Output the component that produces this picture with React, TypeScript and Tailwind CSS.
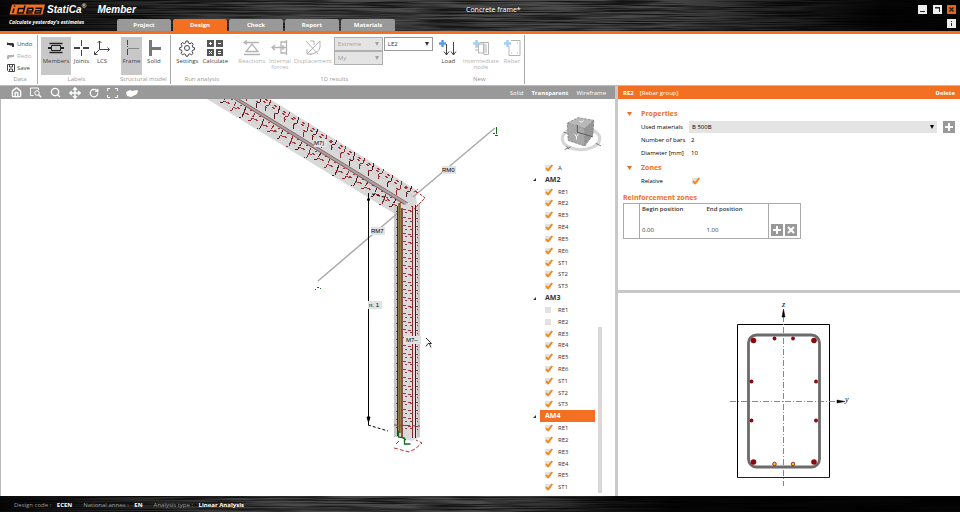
import { useState } from "react";
import type { ReactNode } from "react";
import { Home, Move, RotateCw, Search } from "lucide-react";
import clsx from "clsx";

const tabs = ["Project", "Design", "Check", "Report", "Materials"];

const tree = [
  { name: "AM2", items: ["RE1", "RE2", "RE3", "RE4", "RE5", "RE6", "ST1", "ST2", "ST3"], off: [] as string[] },
  { name: "AM3", items: ["RE1", "RE2", "RE3", "RE4", "RE5", "RE6", "ST1", "ST2", "ST3"], off: ["RE1", "RE2"] },
  { name: "AM4", items: ["RE1", "RE2", "RE3", "RE4", "RE5", "ST1"], off: [] as string[] },
];

// brushed metal behind the title bar and the status bar
const Brushed = ({ id }: { id: string }) => (
  <svg className="absolute inset-0 w-full h-full" aria-hidden="true">
    <filter id={id} x="0" y="0" width="100%" height="100%">
      <feTurbulence type="fractalNoise" baseFrequency="0.012 0.7" numOctaves="3" seed="4" />
      <feColorMatrix values="0 0 0 0 0  0 0 0 0 0  0 0 0 0 0  0 0 0 3 -1.1" />
    </filter>
    <rect width="100%" height="100%" opacity=".7" filter={`url(#${id})`} />
  </svg>
);

const ToolButton = ({
  label,
  width,
  active,
  disabled,
  children,
}: {
  label: string;
  width: string;
  active?: boolean;
  disabled?: boolean;
  children: ReactNode;
}) => (
  <button
    disabled={disabled}
    className={clsx(
      "flex flex-col items-center h-[38px] pt-[2px] shrink-0",
      width,
      active && "bg-[#c8c8c8]",
      disabled ? "text-[#b4b4b4]" : "text-[#444]"
    )}
  >
    <svg className="w-[18px] h-[18px] shrink-0" viewBox="0 0 18 18" fill="none" stroke="currentColor">
      {children}
    </svg>
    <span className="text-center leading-[6px] pt-px whitespace-pre">{label}</span>
  </button>
);

const Group = ({ title, className, children }: { title: string; className?: string; children: ReactNode }) => (
  <div className={clsx("flex flex-col items-center shrink-0 pt-[3px]", className)}>
    <div className="flex h-[38px]">{children}</div>
    <div className="h-[9px] leading-[9px] text-[#999] whitespace-nowrap">{title}</div>
  </div>
);

const Divider = () => <div className="w-px my-px bg-[#aaa] shrink-0" />;

const Dropdown = ({ label, value, options, disabled }: { label: string; value: string; options: string[]; disabled?: boolean }) => (
  <div
    className={clsx(
      "relative w-[49px] h-[14px] border",
      disabled ? "bg-[#e4e4e4] border-[#b0b0b0] text-[#a0a0a0]" : "bg-white border-[#999] text-[#333]"
    )}
  >
    <select
      aria-label={label}
      defaultValue={value}
      disabled={disabled}
      className="w-full h-full pl-[3px] appearance-none bg-transparent opacity-100 block"
    >
      {options.map((o) => (
        <option key={o}>{o}</option>
      ))}
    </select>
    <svg className="absolute right-[3px] top-[4px] w-[4px] h-[4px] pointer-events-none" viewBox="0 0 4 4">
      <path d="M0 0h4L2 4z" fill="currentColor" />
    </svg>
  </div>
);

const Tick = ({ label, on }: { label: string; on: boolean }) => {
  const [checked, setChecked] = useState(on);
  return (
    <span className="relative flex w-[8px] h-[8px] shrink-0">
      <input
        type="checkbox"
        aria-label={label}
        checked={checked}
        onChange={(e) => setChecked(e.target.checked)}
        className="appearance-none w-[6px] h-[6px] mt-px bg-[#e2e2e2]"
      />
      {checked && (
        <svg className="absolute inset-0 w-[8px] h-[8px] pointer-events-none" viewBox="0 0 8 8" fill="none">
          <path d="M1 4 3 6.300 7.300 1" stroke="#f7860f" strokeWidth="1.800" />
        </svg>
      )}
    </span>
  );
};

const SquareButton = ({ label, children }: { label: string; children: ReactNode }) => (
  <button aria-label={label} className="w-[12px] h-[12px] bg-[#999] shrink-0">
    <svg className="w-[12px] h-[12px]" viewBox="0 0 12 12" stroke="white" strokeWidth="2">
      {children}
    </svg>
  </button>
);

const TitleBar = () => (
  <header className="relative bg-[linear-gradient(90deg,#0a0a0a,#4a4a4a_30%,#4a4a4a_68%,#050505_92%)] border-b-3 border-[#f36f21] h-[34px] shrink-0">
    <Brushed id="metal-top" />
    <div className="relative flex h-full text-white">
      <div className="w-[117px] pl-[9px] pt-[3px] shrink-0">
        <div className="flex items-center h-[13px]">
          <svg className="w-[36px] h-[11px] shrink-0" viewBox="0 0 36 11" fill="none" stroke="#f36f21">
            <path d="M3 .5H36L33.500 10.500H.5Z" fill="#f36f21" stroke="none" />
            <g stroke="#111" strokeWidth="1.500">
              <path d="M5 4.500 3.800 9M5.600 1.500v1.200" />
              <path d="M16 1.500 14.200 9H8.500L9.600 4.500H15" />
              <path d="M18 7h5.500L24 4.200H19L17.600 9H23.500" />
              <path d="M26.500 4.200H32.500L31.300 9H26L26.600 6.800H31" />
            </g>
          </svg>
          <span className="w-[38px] pl-[2px] font-['Liberation_Sans'] font-bold italic text-[10px] leading-[13px]">StatiCa</span>
          <span className="w-[4px] text-[6px] leading-[6px] self-start">®</span>
          <span className="pl-[12px] font-['Liberation_Sans'] font-bold italic text-[10px] leading-[13px]">Member</span>
        </div>
        <div className="pt-[2px] font-bold italic text-[5px] leading-[8px] whitespace-nowrap">
          Calculate yesterday&apos;s estimates
        </div>
      </div>
      <nav className="flex items-end gap-[2px]">
        {tabs.map((tab) => (
          <button
            key={tab}
            className={clsx(
              "w-[54px] h-[12px] rounded-t-[2px] font-bold leading-[12px]",
              tab === "Design" ? "bg-[#f36f21]" : "bg-[#999]"
            )}
          >
            {tab}
          </button>
        ))}
      </nav>
      <h1 className="pl-[71px] pt-[4px] text-[7px] leading-[12px] whitespace-nowrap">Concrete frame*</h1>
      <div className="ml-auto mr-[4px] pt-[5px] flex flex-col items-end gap-[5px]">
        <div className="flex">
          <button aria-label="Minimize" className="w-[9px] h-[9px] bg-[#eee] mr-[6px]">
            <svg className="w-[9px] h-[9px]" viewBox="0 0 9 9"><path d="M2 6h5v1H2z" fill="#222" /></svg>
          </button>
          <button aria-label="Restore" className="w-[9px] h-[9px] bg-[#eee] mr-[5px]">
            <svg className="w-[9px] h-[9px]" viewBox="0 0 9 9"><path d="M2 2h5v5H6V3.500H2z" fill="#222" /></svg>
          </button>
          <button aria-label="Close" className="w-[9px] h-[9px] bg-[#e8641b]">
            <svg className="w-[9px] h-[9px]" viewBox="0 0 9 9"><path d="m2.500 2.500 4 4m0-4-4 4" stroke="#222" strokeWidth="1.400" /></svg>
          </button>
        </div>
        <button aria-label="About" className="w-[9px] h-[9px] bg-[#eee]">
          <svg className="w-[9px] h-[9px]" viewBox="0 0 9 9"><path d="M4 2h1v1H4zM4 4h1v3H4z" fill="#222" /></svg>
        </button>
      </div>
    </div>
  </header>
);

const Ribbon = () => (
  <div className="flex h-[51px] bg-white shrink-0 text-[#444]">
    <div className="w-[37px] flex flex-col pt-[4px] pl-[7px] shrink-0">
      <button className="flex items-center gap-[3px] h-[12px]">
        <svg className="w-[7px] h-[7px]" viewBox="0 0 7 7"><path d="M0 4 0 1 1 2H6L7 3V6H5V4.500H3L2 4z" fill="#333" /></svg>
        Undo
      </button>
      <button disabled className="flex items-center gap-[3px] h-[12px] text-[#b4b4b4]">
        <svg className="w-[7px] h-[7px]" viewBox="0 0 7 7"><path d="M7 4V1L6 2H1L0 3V6H2V4.500H4L5 4z" fill="#b4b4b4" /></svg>
        Redo
      </button>
      <button className="flex items-center gap-[2px] h-[12px]">
        <svg className="w-[8px] h-[8px]" viewBox="0 0 8 8" fill="none" stroke="#444"><path d="M.5.5h7v7h-6l-1-1zM2.500.5v2.500h3V.5M2.500 7V5h3v2.500" /></svg>
        Save
      </button>
      <div className="h-[9px] leading-[9px] mt-px text-[#999] w-[26px] text-center">Data</div>
    </div>
    <Divider />
    <Group title="Labels" className="ml-[3px]">
      <ToolButton label="Members" width="w-[30px]" active>
        <path d="M2.500 4.500h13M2.500 13.500h13" stroke="#222" strokeWidth="1.300" />
        <path d="M4.500 6.500h9v5h-9z" stroke="#222" />
        <path d="M1 9h4M13 9h4" strokeWidth="2" stroke="#222" />
      </ToolButton>
      <ToolButton label="Joints" width="w-[21px]">
        <path d="M8.500 1v6M8.500 11v6" />
        <path d="M1 9h6M10 9h6" strokeWidth="2" />
      </ToolButton>
      <ToolButton label="LCS" width="w-[20px]">
        <path d="M6.500 2v8.500h10M6.500 10.500 1.500 15.500M4.500 4l2-2 2 2M14.500 8.500l2 2-2 2M1.500 12.500v3h3" />
      </ToolButton>
    </Group>
    <Group title="Structural model" className="ml-[8px]">
      <ToolButton label="Frame" width="w-[21px]" active>
        <path d="M5.500 1v5M5.500 7v1M5.500 10v6" />
        <path d="M6 9.500h11" stroke="#888" />
      </ToolButton>
      <ToolButton label="Solid" width="w-[24px]">
        <path d="M5.500 1v16M6 9.500h10" strokeWidth="3" stroke="#777" />
      </ToolButton>
    </Group>
    <div className="w-[3px] shrink-0" />
    <Divider />
    <Group title="Run analysis" className="ml-[3px]">
      <ToolButton label="Settings" width="w-[27px]">
        <circle cx="9" cy="9" r="2.500" />
        <path d="m7.500 4 .5-2h2l.5 2 1.500.7 1.800-1 1.400 1.500-1 1.700.5 1.300 1.800.5v2l-1.800.5-.6 1.400 1 1.800-1.500 1.400-1.700-1-1.400.6-.5 1.800H8l-.5-1.800-1.400-.6-1.700 1L3 14.300l1-1.700-.6-1.500L1.600 10.700V8.700l1.800-.5L4 6.800 3 5.100l1.400-1.500 1.800 1z" />
      </ToolButton>
      <ToolButton label="Calculate" width="w-[29px]">
        <path d="M1 1h7v7H1zM10 1h7v7h-7zM1 10h7v7H1zM10 10h7v7h-7z" fill="#555" stroke="none" />
        <path d="M3 4.500h3M4.500 3v3M12 4.500h3M3 12l3 3m0-3-3 3M12 12.500h3M12 14.500h3" stroke="white" />
      </ToolButton>
    </Group>
    <Group title="1D results" className="ml-[6px]">
      <ToolButton label="Reactions" width="w-[32px]" disabled>
        <path d="M1 3.500h15M4 1.500 1 3.500l3 2M9 5l6 7.500H3zM1 15.500h16" strokeWidth="1.300" />
      </ToolButton>
      <ToolButton label={"Internal\nforces"} width="w-[24px]" disabled>
        <path d="M1 8.500h14M4 6 1 8.500 4 11M15.500 1v15M15 3H10v11h5M12 6v5" strokeWidth="1.300" />
      </ToolButton>
      <ToolButton label="Displacement" width="w-[42px]" disabled>
        <path d="M2 2l12 13M16 2 3 15M16 2v6q-1 6-10 7.500M3 10v5h5M6 2h4v4" />
      </ToolButton>
      <div className="flex flex-col">
        <Dropdown label="Result extreme" value="Extreme" options={["Extreme", "All"]} disabled />
        <Dropdown label="Result component" value="My" options={["My", "Mz", "N"]} disabled />
      </div>
      <div className="pl-px">
        <Dropdown label="Load effect" value="LE2" options={["LE1", "LE2"]} />
      </div>
    </Group>
    <Group title="New" className="ml-[3px]">
      <ToolButton label="Load" width="w-[25px]">
        <path d="M7.500 5v11M14.500 3v13M5 12.500 7.500 16l2.500-3.500M12 12.500l2.500 3.500 2.500-3.500" />
        <path d="M0 4.500h7M3.500 1v7" stroke="#5b9be6" strokeWidth="2.500" />
      </ToolButton>
      <ToolButton label={"Intermediate\nnode"} width="w-[40px]" disabled>
        <path d="M6.500 5v9h5V5zM8 3.500h8.500v12H12M12 3.500v12M3 8h3M3 11h3M14 5v9" />
        <path d="M1 4.500h7M4.500 1v7" stroke="#a9cdf3" strokeWidth="2.500" />
      </ToolButton>
      <ToolButton label="Rebar" width="w-[22px]" disabled>
        <path d="M8 1.500h9v15H6V7M8 14h1M14 14h1M14 4h1" />
        <path d="M1 4.500h7M4.500 1v7" stroke="#a9cdf3" strokeWidth="2.500" />
      </ToolButton>
    </Group>
    <div className="w-px" />
    <Divider />
  </div>
);

// stirrup marks along the inclined beam
const beamMarks = Array.from({ length: 19 }, (_, i) => {
  const t = i / 19;
  return { x: Math.round(222 + t * 178), y: Math.round(91 + t * 109), j: (i * 37) % 5 };
});

const columnMarks = Array.from({ length: 28 }, (_, i) => ({ y: 209 + i * 8, j: (i * 23) % 4 }));

const Scene = () => (
  <svg className="absolute top-0 left-0 w-[614px] h-[397px]" viewBox="1 99 614 397" fill="none">
    <path d="M207 99H270L415 189 417 204 403 214H395Z" fill="#d8d8d8" />
    <path d="M394 206h26v231l-8 4-18-5z" fill="#dadada" />
    <path d="M394 204h3v233h-3zM417 204h3v233h-3z" fill="#c8c8c8" />
    <path d="M495 128 413 197M399 212 318 281" stroke="#aaa" strokeWidth="1.500" />
    <g strokeDasharray="1 2" stroke="#bbb">
      <path d="M217 99 400 209M227 99 404 205M252 99 412 196M262 99 414 192" />
    </g>
    <path d="M236 99 406 204" stroke="#a3a3a3" strokeWidth="3" />
    <path d="M234 99 404 204M239 99 408 203" stroke="#86494c" strokeWidth=".8" />
    <g shapeRendering="crispEdges">
      {beamMarks.map((m, i) => (
        <g key={i} stroke={i % 2 ? "#93262c" : "#4c1a20"}>
          <path d={`M${m.x + 21} ${m.y - 8}l-2 ${4 + m.j}l-3 1l-1 5`} />
          <path d={`M${m.x + 5} ${m.y + 5}l-4 ${6 + m.j}l-3 1`} strokeDasharray="5 1" />
          <path
            d={`M${m.x + 24} ${m.y - 3}l3 2M${m.x + 2} ${m.y + 10}l4 2M${m.x - 4} ${m.y + 5}l3 2M${m.x + 13} ${m.y - 7}l3 2M${m.x + 9} ${m.y + 8}l2 1M${m.x + 15} ${m.y - 1}l2 1`}
            stroke="#a8343a"
          />
        </g>
      ))}
      {columnMarks.map((m, i) => (
        <g key={i} stroke="#98383c">
          <path d={`M403 ${m.y}l9 2`} strokeDasharray="3 2" />
          <path d={`M405 ${m.y + 4}l7 ${m.j - 2}`} strokeDasharray="2 3" />
          <path d={`M396 ${m.y + 2}h2M416 ${m.y + 1}l2 1M417 ${m.y + 4}h1`} />
        </g>
      ))}
    </g>
    <path d="M397.500 206v230" stroke="#4a2a24" />
    <path d="M399.500 203v230" stroke="#7d6015" strokeWidth="2.500" />
    <path d="M402 208v230" stroke="#6b1f28" strokeWidth="1.500" />
    <path d="M412.500 206v232" stroke="#7e2a2e" />
    <path d="M415.500 205v233" stroke="#4e1418" />
    <path d="M414 192l4-3M420 194l5 4-9 9M411 206l4 3" stroke="#b22f34" strokeDasharray="3 1" />
    <path d="M394 425l26 1M394 448l15 4 6-3 7-6-6-3M396 444l3-3" stroke="#b22f34" strokeDasharray="4 2" />
    <path d="M398.500 431v6l6 1v6h6M402 437l4 3" stroke="#156b1d" strokeWidth="1.300" />
    <path d="M496.500 127v7M493 133.500h2M495 135.500h3" stroke="#156b1d" />
    <path d="M315 289.500h1M317 287.500h2M320 288.500h1" stroke="#156b1d" />
    <path d="M368.500 193v232" stroke="#000" />
    <circle cx="368.500" cy="199.500" r="1.500" fill="#000" />
    <path d="M367 417h3l-1.500 5z" fill="#000" stroke="#000" />
    <path d="M368 425l20 6M372 194l16 4" stroke="#000" strokeDasharray="3 2" />
    <g fill="#e2e2e2">
      <path d="M314 139h13v8h-13zM371 227h14v8h-14zM368 301h14v8h-14zM404 336h17v8h-17zM442 166h14v8h-14z" />
    </g>
    <g fill="#000" fontSize="6" fontFamily="Liberation Sans">
      <text x="314" y="145">M7)</text>
      <text x="371" y="233">RM7</text>
      <text x="369" y="307">n. 1</text>
      <text x="406" y="342">M7–</text>
      <text x="442" y="172">RM0</text>
    </g>
    <path d="M426 338l5.500 5.500H428l-2 3M429.500 344l1.500 3.500" stroke="#333" />
  </svg>
);

const ViewCube = () => (
  <svg className="w-[46px] h-[40px]" viewBox="0 0 46 40">
    <ellipse cx="23" cy="24" rx="20.500" ry="12" fill="none" stroke="#d6d6d6" strokeWidth="3.500" />
    <path d="m8 7 12-6 17 3-10 9z" fill="#b8b8b8" />
    <path d="m8 7 19 6v19L9 26z" fill="#a8a8a8" />
    <path d="m27 13 10-9-1 16-9 12z" fill="#969696" />
    <path d="m8 7 12-6 17 3-10 9zM27 13v19L9 26 8 7M27 32l9-12 1-16" fill="none" stroke="#888" strokeDasharray="3 1" />
    <path d="M19 9v8l17 5" fill="none" stroke="#555" />
    <path d="m16 19 2 3 2-3m-2 3v3M21 5l3 1 2-2" fill="none" stroke="#fff" />
    <path d="m5 36 7-3m-5-1 3 4M39 29l6 3M4 17l4 1" stroke="#777" />
  </svg>
);

const Tree = () => (
  <div className="flex flex-1 text-[6px] text-[#333]">
    <ul className="flex flex-col flex-1">
      <li className="flex-1 flex items-center pl-[12px] gap-[5px] min-h-0 overflow-hidden">
        <Tick label="A" on />
        <span>A</span>
      </li>
      {tree.map((group) => [
        <li key={group.name} className="flex-1 flex items-center min-h-0">
          <svg className="w-[3px] h-[3px] mr-[4px]" viewBox="0 0 3 3"><path d="M3 0v3H0z" fill="#333" /></svg>
          <span
            className={clsx(
              "flex-1 h-full flex items-center pl-[5px] font-bold text-[7px] leading-[8px]",
              group.name === "AM4" && "bg-[#f36f21] text-white"
            )}
          >
            {group.name}
          </span>
        </li>,
        ...group.items.map((item) => (
          <li key={`${group.name}-${item}`} className="flex-1 flex items-center pl-[12px] gap-[5px] min-h-0 leading-[8px]">
            <Tick label={`${group.name} ${item}`} on={!group.off.includes(item)} />
            <span>{item}</span>
          </li>
        )),
      ])}
    </ul>
    <div className="w-[4px] ml-[3px] mt-[165px] bg-[#d8d8d8]" />
  </div>
);

const Viewport = () => (
  <section className="flex flex-col flex-1 min-w-0">
    <div className="flex items-center h-[13px] bg-[#999] text-white pl-[11px] pr-[9px] shrink-0">
      <div className="flex items-center gap-[8px]">
        <button aria-label="Home"><Home className="w-[11px] h-[11px]" strokeWidth={3} /></button>
        <button aria-label="Zoom window">
          <svg className="w-[12px] h-[11px]" viewBox="0 0 12 11" fill="none" stroke="white">
            <path d="M8.500 3V1h-8v7.500h3" /><circle cx="7" cy="6" r="2.300" /><path d="m8.700 7.700 2.500 2.500" strokeWidth="1.400" />
          </svg>
        </button>
        <button aria-label="Zoom"><Search className="w-[11px] h-[11px]" strokeWidth={3} /></button>
        <button aria-label="Pan"><Move className="w-[12px] h-[12px]" strokeWidth={3} /></button>
        <button aria-label="Rotate"><RotateCw className="w-[10px] h-[10px]" strokeWidth={3} /></button>
        <button aria-label="Fit">
          <svg className="w-[11px] h-[10px]" viewBox="0 0 11 10" fill="none" stroke="white">
            <path d="M.5 3V.5H3M8 .5h2.500V3M10.500 7v2.500H8M3 9.500H.5V7" />
          </svg>
        </button>
        <button aria-label="Shading">
          <svg className="w-[12px] h-[8px]" viewBox="0 0 12 8"><path d="M0 3 4 1l2 1 5-1 1 1-1 3-6 3-4-1z" fill="white" /></svg>
        </button>
      </div>
      <div className="flex ml-auto gap-[8px]">
        <button>Solid</button>
        <button className="font-bold">Transparent</button>
        <button>Wireframe</button>
      </div>
    </div>
    <div className="relative flex flex-1 justify-end border-l border-[#bbb] bg-white">
      <Scene />
      <div className="relative flex flex-col w-[69px] mr-[13px] pt-[16px] pb-[3px]">
        <div className="flex pl-[27px] pb-[7px]">
          <ViewCube />
        </div>
        <Tree />
      </div>
    </div>
  </section>
);

const SectionHeading = ({ children }: { children: ReactNode }) => (
  <h2 className="flex items-center gap-[9px] pl-[9px] h-[13px] font-bold text-[7px] text-[#f36f21]">
    <svg className="w-[5px] h-[4px]" viewBox="0 0 5 4"><path d="M0 0h5L2.500 4z" fill="#f36f21" /></svg>
    {children}
  </h2>
);

const Properties = () => (
  <div className="flex-1 bg-white pt-[8px] text-black">
    <SectionHeading>Properties</SectionHeading>
    <div className="flex items-center h-[13px] pl-[23px] pr-[5px]">
      <label htmlFor="material" className="w-[48px] shrink-0 whitespace-nowrap">Used materials</label>
      <div className="relative flex-1 h-[12px] bg-[#e4e4e4] mr-[6px]">
        <select id="material" className="block w-full h-full pl-[3px] appearance-none">
          <option>B 500B</option>
        </select>
        <svg className="absolute right-[3px] top-[4px] w-[4px] h-[4px] pointer-events-none" viewBox="0 0 4 4">
          <path d="M0 0h4L2 4z" />
        </svg>
      </div>
      <SquareButton label="Add material"><path d="M2 6h8M6 2v8" /></SquareButton>
    </div>
    <div className="flex items-center h-[13px] pl-[23px]">
      <label htmlFor="bars" className="w-[50px] whitespace-nowrap">Number of bars</label>
      <input id="bars" defaultValue="2" className="w-[60px] h-[10px]" />
    </div>
    <div className="flex items-center h-[13px] pl-[23px]">
      <label htmlFor="diameter" className="w-[50px] whitespace-nowrap">Diameter [mm]</label>
      <input id="diameter" defaultValue="10" className="w-[60px] h-[10px]" />
    </div>
    <div className="pt-[2px]">
      <SectionHeading>Zones</SectionHeading>
    </div>
    <div className="flex items-center h-[13px] pl-[23px]">
      <span className="w-[51px]">Relative</span>
      <Tick label="Relative" on />
    </div>
    <h2 className="mt-[5px] pl-[5px] h-[11px] leading-[11px] font-bold text-[7px] text-[#f36f21]">Reinforcement zones</h2>
    <table className="ml-[5px] w-[177px] table-fixed border border-[#aaa] text-left text-[#333]">
      <colgroup>
        <col className="w-[16px]" />
        <col className="w-[65px]" />
        <col className="w-[64px]" />
        <col className="w-[32px]" />
      </colgroup>
      <thead>
        <tr className="h-[19px] align-top leading-[10px]">
          <th className="border-r border-[#aaa]" />
          <th className="pl-[2px] font-semibold">Begin position</th>
          <th className="pl-[2px] font-semibold">End position</th>
          <th className="border-l border-[#aaa]" />
        </tr>
      </thead>
      <tbody>
        <tr className="h-[16px] align-middle">
          <td className="border-r border-[#aaa]" />
          <td className="pl-[2px]">0.00</td>
          <td className="pl-[2px]">1.00</td>
          <td className="border-l border-[#aaa]">
            <div className="flex gap-[2px] pl-[2px]">
              <SquareButton label="Add zone"><path d="M2 6h8M6 2v8" /></SquareButton>
              <SquareButton label="Remove zone"><path d="m3 3 6 6m0-6-6 6" /></SquareButton>
            </div>
          </td>
        </tr>
      </tbody>
    </table>
  </div>
);

const CrossSection = () => (
  <svg className="w-full h-[203px]" viewBox="618 293 342 203" fill="none">
    <path d="M737.500 477.500v-153h92v153" stroke="#000" />
    <path d="M737.500 477.500h92" stroke="#222" />
    <g stroke="#888" strokeDasharray="6 2 1 2">
      <path d="M783.500 316v170M730 401.500h108" />
    </g>
    <rect x="748.500" y="335" width="71" height="132" rx="8" stroke="#6b6b6b" strokeWidth="2.800" />
    <path d="m783.500 309 1.500 8h-3zM845 401.500l-8 1.500v-3z" fill="#000" stroke="#000" strokeWidth=".5" />
    <g fill="#8b0a10">
      {[[753.5, 340.5], [814, 340.5], [753.5, 462], [814, 462]].map(([x, y]) => (
        <circle key={`${x}-${y}`} cx={x} cy={y} r="2.800" />
      ))}
      {[[774.5, 338.5], [793, 338.5], [751.5, 381.5], [816, 381.5], [751.5, 420.5], [816, 420.5]].map(([x, y]) => (
        <circle key={`${x}-${y}`} cx={x} cy={y} r="1.900" />
      ))}
    </g>
    <g fill="#ffc20e" stroke="#8b0a10" strokeWidth=".8">
      <circle cx="774.500" cy="464" r="1.800" />
      <circle cx="793" cy="464" r="1.800" />
    </g>
    <g fill="#000" fontFamily="Liberation Serif" fontStyle="italic" fontSize="8">
      <text x="782" y="307">z</text>
      <text x="845" y="402">y</text>
    </g>
  </svg>
);

const StatusBar = () => (
  <footer className="relative h-[16px] bg-[linear-gradient(90deg,#0a0a0a,#4a4a4a_30%,#4a4a4a_50%,#050505_70%)] shrink-0">
    <Brushed id="metal-bottom" />
    <div className="relative flex items-center h-full pl-[14px] pt-px gap-[11px] text-[#999] whitespace-nowrap">
      <span>Design code : <b className="text-white pl-[4px]">ECEN</b></span>
      <span>National annex : <b className="text-white pl-[4px]">EN</b></span>
      <span>Analysis type : <b className="text-white pl-[4px]">Linear Analysis</b></span>
    </div>
  </footer>
);

const App = () => {
  return (
    <div className="flex flex-col min-h-screen bg-white font-['Open_Sans',sans-serif] text-[6px] leading-[8px]">
      <TitleBar />
      <Ribbon />
      <main className="flex flex-1 border-t border-[#bbb]">
        <Viewport />
        <div className="w-[3px] bg-[#c8c8c8] shrink-0" />
        <aside className="flex flex-col w-[342px] shrink-0">
          <div className="flex items-center h-[13px] px-[5px] bg-[#f36f21] text-white shrink-0">
            <b>RE2</b>
            <span className="pl-[6px]">[Rebar group]</span>
            <button className="ml-auto font-bold">Delete</button>
          </div>
          <Properties />
          <div className="h-[3px] bg-[#c8c8c8]" />
          <CrossSection />
        </aside>
      </main>
      <StatusBar />
    </div>
  );
};

export default App;
